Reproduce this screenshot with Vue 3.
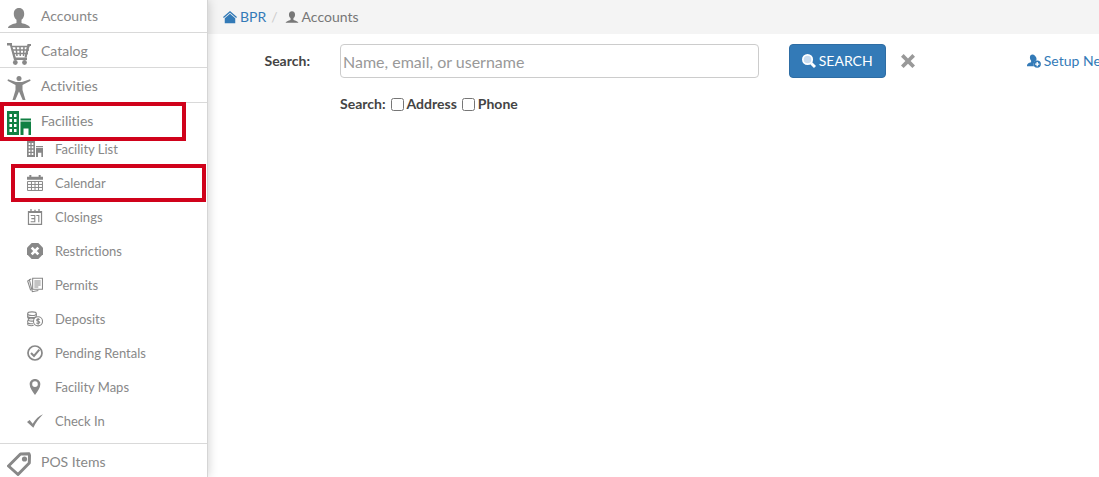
<script setup>
import { ref } from 'vue'

const query = ref('')
const byAddress = ref(false)
const byPhone = ref(false)

const icons = {
  user: '<path d="M12 0C8.500 0 6.800 2.500 6.800 6c0 2.500 1 4.500 2.700 5.800V15C6 16 1 17.500 1 20h22c0-2.500-5-4-8.500-5v-3.200C16.200 10.500 17.200 8.500 17.200 6c0-3.500-1.700-6-5.200-6z" transform="translate(0 2)"/>',
  cart: '<path d="M0 2h5v2.500L8.800 16.500H20V19H7L3 4.500H0z"/><g stroke="currentColor" stroke-width="1.500" fill="none"><path d="M4 5.500h18.500M6 9h16M7 12.500h14M9 5.500l1 9.500M13 5.500l.3 9.500M17 5.500l-.5 9.500M21 5l-2 10.500"/></g><path d="M20.500 3H24v2h-1.500L19.500 16.500h-2z"/><circle cx="8.300" cy="21.500" r="2.400"/><circle cx="17.500" cy="21.500" r="2.400"/>',
  person: '<circle cx="12" cy="2.500" r="2.500"/><path d="M1 3.200l8 2.800h6l8-2.800.6 1.500L15.500 9v5L18.500 24h-2.800L12 15.500 8.300 24H5.500l3-10V9L.5 4.700z"/>',
  building: '<path fill-rule="evenodd" d="M0 0h12v24H0zM2.500 3v3h2.500V3zm4.500 0v3h2.500V3zM2.500 8v3h2.500V8zm4.500 0v3h2.500V8zM2.500 13v3h2.500v-3zm4.500 0v3h2.500v-3zM2.500 18v3h2.500v-3zm4.500 0v3h2.500v-3z"/><path d="M13.500 7.500H24v2H13.500zM13.500 10.500H24V24h-2.500v-6.500h-5V24h-3z"/>',
  calendar: '<path d="M3.500 0h3v3h-3zM17.500 0h3v3h-3zM0 2.500h24V7H0z"/><path fill="none" stroke="currentColor" stroke-width="1.500" d="M.8 9.700h22.400v13.500H.8zM.8 14.200h22.400M.8 18.700h22.400M6.700 9.700v13.500M12 9.700v13.500M17.300 9.700v13.500"/>',
  day: '<path fill="none" stroke="currentColor" stroke-width="1.800" d="M2.200 4h19.600v19H2.200z"/><path fill="none" stroke="currentColor" stroke-width="1.600" d="M5.500 9.700h6.200v9.500H5.500M6.500 14.400h5.200M14 9.700h3.700v10"/><path d="M5 0h2v5H5zM11 1h2v4h-2zM17 0h2v5h-2zM2 3h20v3H2z"/>',
  blocked: '<path d="M7 0h10l7 7v10l-7 7H7l-7-7V7z"/><path fill="none" stroke="#fff" stroke-width="4" d="M7 7l10 10M17 7L7 17"/>',
  papers: '<g fill="none" stroke="currentColor" stroke-width="1.600"><path d="M8.500 2h14.700v16.500H8.500zM11 6h9.500M11 9h9.500M11 12h9.500M11 15h6M6.500 3l-3 1 4.500 18 9-1.800M3.500 5L1 6l4.500 14"/></g>',
  coins: '<g fill="none" stroke="currentColor" stroke-width="1.600"><ellipse cx="7.500" cy="4" rx="6.500" ry="2.700"/><path d="M1 4v3.500c0 3 13 3 13 0V4M2 10v3c0 2 5 2.500 8 2M1 14v3c0 2 5 2.500 8 2M1 18v2c0 2 6 2.500 9 1.500M1 8.500C0 12 8 12.500 14 10"/><circle cx="16.500" cy="15.500" r="6.800" fill="#fff"/><path d="M19 13c-1-1-4.500-1.300-4.500.7 0 2.200 4.700 1 4.700 3.300 0 2-3.700 2-5.200.7M16.700 10.500v10"/></g>',
  approved: '<circle cx="12" cy="12" r="10.500" fill="none" stroke="currentColor" stroke-width="2.600"/><path fill="none" stroke="currentColor" stroke-width="3" d="M6 12l4.500 4.500L18.500 7"/>',
  pin: '<path fill-rule="evenodd" d="M12 0c-4.500 0-8 3.300-8 7.800C4 13 8 18.500 12 24c4-5.500 8-11 8-16.200C20 3.300 16.500 0 12 0zm0 3.500a4.200 4.200 0 1 1 0 8.400 4.200 4.200 0 0 1 0-8.400z"/>',
  check: '<path d="M0 13.500l4-3 4.500 5.500C13 9 18 4.500 24 2 18.500 7.500 13.500 14 9.500 22z"/>',
  tag: '<path fill="none" stroke="currentColor" stroke-width="3" stroke-linejoin="round" d="M13.500 2L22 1.800l.5 1.700-.2 7.500L11 22.500 1.500 14z"/><circle cx="17.500" cy="7" r="2.600"/>',
  home: '<path d="M12 1.500L24 12l-1.500 1.700L12 4.700 1.500 13.700 0 12z"/><path d="M12 6.500l9 7.500v8.500H3V14z"/>',
  search: '<circle cx="9.500" cy="9.500" r="8" fill="#c8dcf0" stroke="currentColor" stroke-width="3"/><path d="M14 17.500l3.500-3.500 6.500 6.500-3.500 3.500z"/>',
  close: '<path d="M4.500 0L12 7.500 19.500 0 24 4.500 16.500 12l7.500 7.500-4.500 4.500-7.500-7.500L4.500 24 0 19.500 7.500 12 0 4.500z"/>',
  addUser: '<path d="M9.500 1C6.500 1 5 3 5 6c0 2 .8 4 2 5v3c-4 1-7 2-7 7h12c-2-5 1-9 4-10 .5-1 0-2 .2-4C14.200 3 12.500 1 9.500 1z"/><path fill-rule="evenodd" d="M17.500 11a6.300 6.300 0 1 0 0 12.600 6.300 6.300 0 0 0 0-12.600zm-1.200 2.700h2.400v2.400h2.400v2.400h-2.400v2.400h-2.400v-2.400h-2.400v-2.400h2.400z"/>'
}

const topItems = [
  { label: 'Accounts', icon: 'user' },
  { label: 'Catalog', icon: 'cart' },
  { label: 'Activities', icon: 'person' }
]

const facilityItems = [
  { label: 'Facility List', icon: 'building' },
  { label: 'Calendar', icon: 'calendar', marked: true },
  { label: 'Closings', icon: 'day' },
  { label: 'Restrictions', icon: 'blocked' },
  { label: 'Permits', icon: 'papers' },
  { label: 'Deposits', icon: 'coins' },
  { label: 'Pending Rentals', icon: 'approved' },
  { label: 'Facility Maps', icon: 'pin' },
  { label: 'Check In', icon: 'check' }
]
</script>

<template>
  <div class="page">
    <nav class="sidebar" aria-label="Main">
      <ul class="menu">
        <li v-for="item in topItems" :key="item.label" class="entry">
          <a href="#" class="entry-link">
            <svg class="icon-lg" viewBox="0 0 24 24" aria-hidden="true" v-html="icons[item.icon]"></svg>
            <span>{{ item.label }}</span>
          </a>
        </li>
        <li class="entry">
          <a href="#" class="entry-link open">
            <svg class="icon-lg" viewBox="0 0 24 24" aria-hidden="true" v-html="icons.building"></svg>
            <span>Facilities</span>
          </a>
          <ul class="submenu">
            <li v-for="item in facilityItems" :key="item.label">
              <a href="#" class="sub-link" :class="{ marked: item.marked }">
                <svg class="icon-sm" viewBox="0 0 24 24" aria-hidden="true" v-html="icons[item.icon]"></svg>
                <span>{{ item.label }}</span>
              </a>
            </li>
          </ul>
        </li>
        <li class="entry">
          <a href="#" class="entry-link">
            <svg class="icon-lg" viewBox="0 0 24 24" aria-hidden="true" v-html="icons.tag"></svg>
            <span>POS Items</span>
          </a>
        </li>
      </ul>
    </nav>

    <main class="content">
      <nav class="breadcrumb" aria-label="Breadcrumb">
        <a href="#" class="crumb">
          <svg class="icon-xs" viewBox="0 0 24 24" aria-hidden="true" v-html="icons.home"></svg>
          <span>BPR</span>
        </a>
        <span class="slash">/</span>
        <span class="crumb current">
          <svg class="icon-xs" viewBox="0 0 24 24" aria-hidden="true" v-html="icons.user"></svg>
          <span>Accounts</span>
        </span>
      </nav>

      <form class="search-form" @submit.prevent>
        <label class="field-label" for="query">Search:</label>
        <input id="query" v-model="query" class="query" type="text" placeholder="Name, email, or username" />
        <div class="actions">
          <button type="submit" class="search-button">
            <svg class="icon-xs" viewBox="0 0 24 24" aria-hidden="true" v-html="icons.search"></svg>
            <span>SEARCH</span>
          </button>
          <button type="button" class="clear-button" aria-label="Clear" @click="query = ''">
            <svg class="icon-xs" viewBox="0 0 24 24" aria-hidden="true" v-html="icons.close"></svg>
          </button>
        </div>
        <a href="#" class="setup-link">
          <svg class="icon-xs" viewBox="0 0 24 24" aria-hidden="true" v-html="icons.addUser"></svg>
          <span>Setup New Account</span>
        </a>
        <div class="options">
          <span>Search:</span>
          <input id="by-address" v-model="byAddress" type="checkbox" />
          <label for="by-address">Address</label>
          <input id="by-phone" v-model="byPhone" type="checkbox" />
          <label for="by-phone">Phone</label>
        </div>
      </form>
    </main>
  </div>
</template>

<style>
body {
  margin: 0;
  background: #fff;
}
</style>

<style scoped>
.page {
  display: flex;
  height: 100vh;
  overflow: hidden;
  font-family: Lato, "Liberation Sans", sans-serif;
  font-size: 14px;
  font-variant-ligatures: none;
  line-height: 20px;
  color: #444;
}

svg {
  display: block;
  flex: none;
  fill: currentColor;
}

a {
  color: #337ab7;
  text-decoration: none;
}

.icon-lg {
  width: 24px;
  height: 24px;
}

.icon-sm {
  width: 16px;
  height: 16px;
}

.icon-xs {
  width: 14px;
  height: 14px;
}

.sidebar {
  flex: none;
  box-sizing: border-box;
  width: 208px;
  overflow: hidden;
  border-right: 1px solid #d5d5d5;
  box-shadow: 0 0 10px rgba(0, 0, 0, 0.2);
  background: #fff;
  z-index: 1;
}

.menu,
.submenu {
  margin: 0;
  padding: 0;
  list-style: none;
}

.menu {
  margin-top: -2px;
}

.entry {
  border-bottom: 1px solid #d9d9d9;
}

.entry-link,
.sub-link {
  position: relative;
  display: flex;
  align-items: center;
  box-sizing: border-box;
  height: 34px;
  color: #888;
}

.entry-link {
  gap: 10px;
  padding-top: 2px;
  padding-left: 7px;
}

.entry-link .icon-lg {
  margin-top: 4px;
}

.open .icon-lg {
  color: #108043;
}

.open::after,
.marked::after {
  content: "";
  position: absolute;
  border: 4px solid #d0021b;
  pointer-events: none;
}

.open::after {
  inset: -1px 21px -4px 0;
}

.marked::after {
  inset: -2px 1px -2px 11px;
}

.submenu {
  margin-top: -5px;
  padding-bottom: 5px;
}

.sub-link {
  gap: 12px;
  padding-left: 27px;
  font-size: 13px;
}

.content {
  flex: 1;
  min-width: 0;
  overflow: hidden;
}

.breadcrumb {
  display: flex;
  align-items: center;
  height: 34px;
  padding-left: 15px;
  background: #f4f4f4;
}

.crumb,
.setup-link {
  display: flex;
  align-items: center;
  gap: 3px;
  white-space: nowrap;
}

.current {
  color: #777;
}

.slash {
  padding: 0 7px 0 5px;
  color: #ccc;
}

.search-form {
  display: grid;
  grid-template-columns: 102px 47% 238px auto;
  row-gap: 16px;
  align-items: center;
  padding-top: 10px;
}

.field-label,
.options {
  font-weight: bold;
}

.field-label {
  text-align: right;
}

.query {
  box-sizing: border-box;
  width: 100%;
  height: 34px;
  margin-left: 30px;
  padding: 2px;
  border: 1px solid #ccc;
  border-radius: 4px;
  font: inherit;
  font-size: 16px;
  color: #444;
}

.query::placeholder {
  color: #999;
  opacity: 1;
}

.actions {
  display: flex;
  align-items: center;
  gap: 15px;
  margin-left: 60px;
}

.search-button {
  display: flex;
  align-items: center;
  gap: 3px;
  height: 34px;
  padding: 0 12px;
  border: 1px solid #2e6da4;
  border-radius: 4px;
  background: #337ab7;
  color: #fff;
  font: inherit;
}

.clear-button {
  padding: 0;
  border: 0;
  background: none;
  color: #999;
}

.setup-link {
  margin-left: 60px;
}

.options {
  grid-column: 2 / -1;
  display: flex;
  align-items: center;
  margin-left: 30px;
}

.options input {
  width: 13px;
  height: 13px;
  margin: 0 3px 0 5px;
}
</style>
